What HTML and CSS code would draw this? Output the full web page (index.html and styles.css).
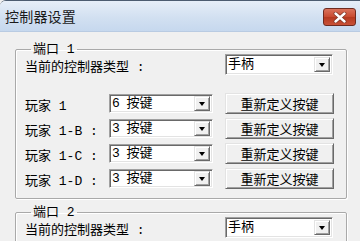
FILE: index.html
```html
<!DOCTYPE html>
<html>
<head>
    <title>控制器设置</title>
    <link rel="stylesheet" href="styles.css">
</head>
<body>
    <div class="window">
        <div class="titlebar">
            <span class="title">控制器设置</span>
            <div class="close-btn" title="关闭">
                <svg width="14" height="11" viewBox="0 0 14 11">
                    <path d="M2.5 1.5 L11.5 9.5 M11.5 1.5 L2.5 9.5" stroke="#7a3324" stroke-width="3.8" stroke-linecap="round"/>
                    <path d="M2.5 1.5 L11.5 9.5 M11.5 1.5 L2.5 9.5" stroke="#ffffff" stroke-width="2.4" stroke-linecap="round"/>
                </svg>
            </div>
        </div>

        <div class="client">
            <!-- 端口 1 -->
            <fieldset class="group">
                <legend>端口 1</legend>
                <div class="type-row">
                    <span class="type-label">当前的控制器类型 :</span>
                    <div class="combo combo-type">
                        <span class="combo-text">手柄</span>
                        <span class="combo-arrow"></span>
                    </div>
                </div>

                <div class="player-row first">
                    <span class="player-label">玩家 1</span>
                    <div class="combo combo-keys">
                        <span class="combo-text">6 按键</span>
                        <span class="combo-arrow"></span>
                    </div>
                    <button class="btn">重新定义按键</button>
                </div>
                <div class="player-row">
                    <span class="player-label">玩家 1-B :</span>
                    <div class="combo combo-keys">
                        <span class="combo-text">3 按键</span>
                        <span class="combo-arrow"></span>
                    </div>
                    <button class="btn">重新定义按键</button>
                </div>
                <div class="player-row">
                    <span class="player-label">玩家 1-C :</span>
                    <div class="combo combo-keys">
                        <span class="combo-text">3 按键</span>
                        <span class="combo-arrow"></span>
                    </div>
                    <button class="btn">重新定义按键</button>
                </div>
                <div class="player-row">
                    <span class="player-label">玩家 1-D :</span>
                    <div class="combo combo-keys">
                        <span class="combo-text">3 按键</span>
                        <span class="combo-arrow"></span>
                    </div>
                    <button class="btn">重新定义按键</button>
                </div>
            </fieldset>

            <!-- 端口 2 -->
            <fieldset class="group group-2">
                <legend>端口 2</legend>
                <div class="type-row">
                    <span class="type-label">当前的控制器类型 :</span>
                    <div class="combo combo-type">
                        <span class="combo-text">手柄</span>
                        <span class="combo-arrow"></span>
                    </div>
                </div>
            </fieldset>
        </div>
    </div>
</body>
</html>
```

FILE: styles.css
```css
html, body {
    margin: 0;
    padding: 0;
}
body {
    width: 360px;
    height: 241px;
    overflow: hidden;
    background-color: #f0f0f0;
    font-family: "Liberation Mono", "Noto Sans CJK SC", monospace;
    font-size: 13px;
    color: #000;
}
.window {
    height: 241px;
    border-top: 1px solid #4c5c70;
    border-top-left-radius: 6px;
    overflow: hidden;
}
.titlebar {
    height: 30px;
    display: flex;
    align-items: center;
    justify-content: space-between;
    padding: 0 4px 0 5px;
    background: linear-gradient(#e6eef8, #d2e0f1 55%, #c6d8ee);
    border-bottom: 1px solid #b9cbe2;
}
.title {
    font-family: "Noto Sans CJK SC", sans-serif;
    font-size: 14px;
    color: #1a1a1a;
    letter-spacing: 0.2px;
}
.close-btn {
    flex: none;
    width: 33px;
    height: 18px;
    margin-top: 2px;
    box-sizing: border-box;
    display: flex;
    align-items: center;
    justify-content: center;
    border: 1px solid #6e2b20;
    border-radius: 3px;
    background: linear-gradient(#da735c, #c84a30 50%, #b63a20 52%, #c85238);
}
.client {
    padding: 11px 0 0 15px;
}
.group {
    width: 332px;
    box-sizing: border-box;
    margin: 0;
    padding: 0 11px 7px 9px;
    border: 1px solid #a9a9a9;
    border-radius: 2px;
    box-shadow: inset 1px 1px 0 #fff, 1px 1px 0 #fff;
}
.group legend {
    margin-left: 6px;
    padding: 0 2px;
    line-height: 13px;
}
.group-2 {
    margin-top: 7px;
}
.type-row {
    display: flex;
    justify-content: space-between;
    align-items: flex-start;
    margin-top: -2px;
    padding-right: 2px;
}
.type-label {
    margin-top: 6px;
    line-height: 16px;
}
.player-row {
    display: flex;
    align-items: center;
    height: 25px;
}
.player-row.first {
    margin-top: 15px;
}
.player-label {
    width: 84px;
    margin-top: 2px;
    white-space: pre;
}
.combo {
    display: flex;
    align-items: center;
    justify-content: space-between;
    box-sizing: border-box;
    background: #fff;
    border-top: 1px solid #a0a0a0;
    border-left: 1px solid #a0a0a0;
    border-right: 1px solid #fff;
    border-bottom: 1px solid #fff;
    box-shadow: inset 1px 1px 0 #696969, inset -1px -1px 0 #e3e3e3;
    padding: 0 2px 0 2px;
}
.combo-type {
    width: 108px;
    height: 21px;
}
.combo-keys {
    width: 104px;
    height: 19px;
}
.combo-text {
    font-size: 13px;
    line-height: 15px;
    word-spacing: -1px;
}
.combo-arrow {
    position: relative;
    width: 16px;
    height: 15px;
    box-sizing: border-box;
    background: #f0f0f0;
    border-top: 1px solid #e3e3e3;
    border-left: 1px solid #e3e3e3;
    border-right: 1px solid #696969;
    border-bottom: 1px solid #696969;
    box-shadow: inset 1px 1px 0 #fff, inset -1px -1px 0 #a0a0a0;
}
.combo-arrow::after {
    content: "";
    position: absolute;
    left: 3.5px;
    top: 5px;
    border-left: 3.5px solid transparent;
    border-right: 3.5px solid transparent;
    border-top: 4px solid #000;
}
.btn {
    width: 109px;
    height: 21px;
    margin-left: 12px;
    padding: 0;
    font-family: "Noto Sans CJK SC", sans-serif;
    font-size: 13px;
    line-height: 17px;
    color: #000;
    background: #f0f0f0;
    border-top: 1px solid #e3e3e3;
    border-left: 1px solid #e3e3e3;
    border-right: 1px solid #696969;
    border-bottom: 1px solid #696969;
    box-shadow: inset 1px 1px 0 #fff, inset -1px -1px 0 #a0a0a0;
}
```
